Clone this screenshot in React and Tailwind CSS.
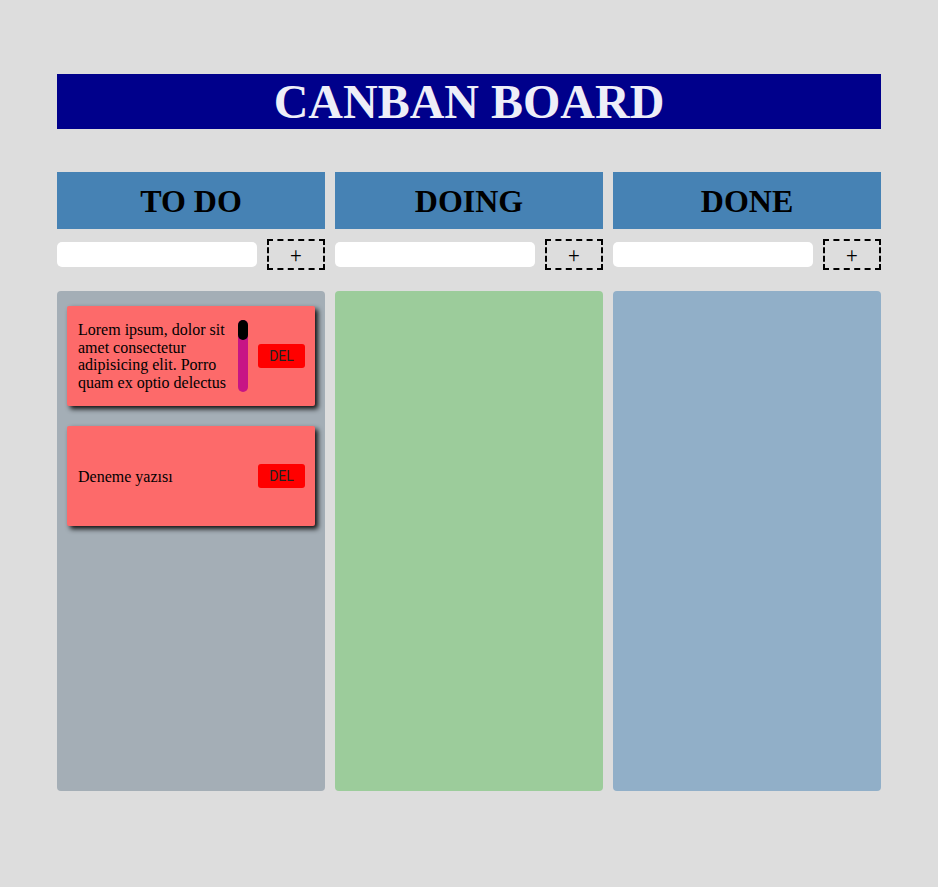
import React, { useState } from "react";

const columns = [
  { title: "TO DO", body: "bg-[#a4aeb6]" },
  { title: "DOING", body: "bg-[#9ccc9b]" },
  { title: "DONE", body: "bg-[#91afc8]" },
];

const Card = ({ text, scroll }) => (
  <div className="flex h-[100px] w-[248px] items-center rounded-[2px] bg-[#fd6a6a] pl-[11px] pr-[10px] shadow-[3px_3px_5px_rgba(0,0,0,0.9)]">
    <div className="flex w-[170px] items-stretch">
      <p className="w-[160px] pt-[1px] font-['Liberation_Serif',serif] text-[16px] leading-[17.5px] text-black">
        {text}
      </p>
      {scroll && (
        <div className="flex h-[72px] w-[10px] flex-col rounded-full bg-[#c71585]">
          <div className="h-[20px] w-[10px] rounded-full bg-black" />
        </div>
      )}
    </div>
    <button className="ml-[10px] flex h-[24px] w-[47px] items-center justify-center rounded-[3px] bg-[#ff0000] font-['Roboto',sans-serif] text-[14px] text-[#222]">
      DEL
    </button>
  </div>
);

const Column = ({ title, body, cards }) => {
  const [value, setValue] = useState("");
  return (
    <div className="flex w-[268px] flex-col">
      <div className="flex h-[57px] items-center justify-center bg-[#4682b4]">
        <h2 className="text-[32px] font-bold text-black">{title}</h2>
      </div>
      <div className="mt-[10px] flex h-[31px] items-center gap-[10px]">
        <input
          type="text"
          value={value}
          onChange={(e) => setValue(e.target.value)}
          className="h-[25px] w-[200px] rounded-[5px] bg-white px-2 text-sm outline-none"
        />
        <button className="flex h-[31px] w-[58px] items-center justify-center border-2 border-dashed border-black font-['Roboto',sans-serif] text-[20px] font-light leading-none text-black">
          +
        </button>
      </div>
      <div className={`mt-[21px] flex h-[500px] flex-col gap-[20px] rounded-[4px] p-[10px] pt-[15px] ${body}`}>
        {cards.map((c, i) => (
          <Card key={i} text={c.text} scroll={c.scroll} />
        ))}
      </div>
    </div>
  );
};

const App = () => {
  const cards = [
    [
      {
        text: "Lorem ipsum, dolor sit amet consectetur adipisicing elit. Porro quam ex optio delectus",
        scroll: true,
      },
      { text: "Deneme yazısı", scroll: false },
    ],
    [],
    [],
  ];

  return (
    <div className="min-h-screen w-full bg-[#dddddd] pt-[74px] font-['Liberation_Serif',serif]">
      <div className="mx-auto w-[824px]">
        <div className="flex h-[55px] items-center justify-center bg-[#00008b]">
          <h1 className="text-[48px] font-bold leading-none text-[#eeeef8]">
            CANBAN BOARD
          </h1>
        </div>
        <div className="mt-[43px] flex gap-[10px]">
          {columns.map((col, i) => (
            <Column key={col.title} title={col.title} body={col.body} cards={cards[i]} />
          ))}
        </div>
      </div>
    </div>
  );
};

export default App;
